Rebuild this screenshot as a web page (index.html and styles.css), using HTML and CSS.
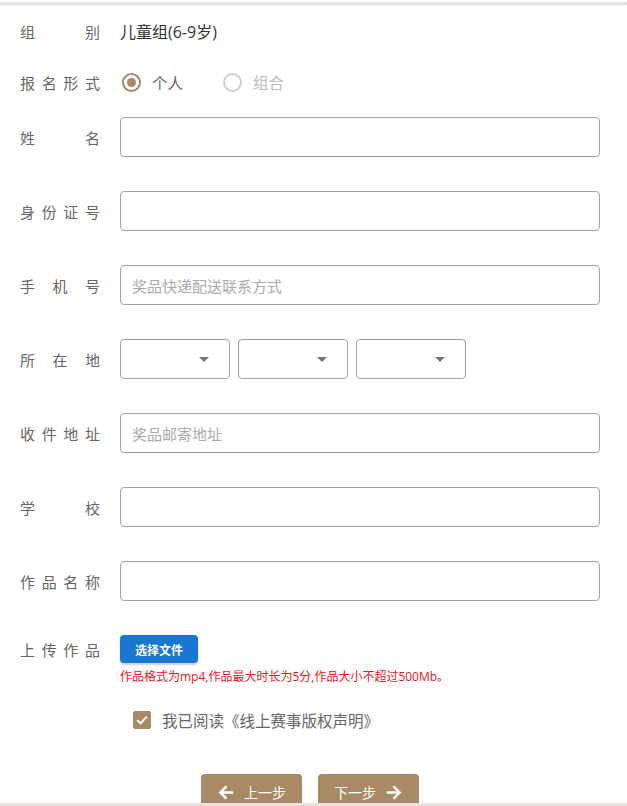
FILE: index.html
```html
<!DOCTYPE html>
<html lang="zh">
<head>
<meta charset="utf-8">
<title>报名</title>
<link rel="stylesheet" href="styles.css">
</head>
<body>
<div class="topline"></div>
<form class="form">
  <div class="row row-text">
    <span class="label">组别</span>
    <span class="value">儿童组(6-9岁)</span>
  </div>
  <div class="row row-radio">
    <span class="label">报名形式</span>
    <label class="radio checked"><span class="dot"></span><span>个人</span></label>
    <label class="radio"><span class="dot"></span><span>组合</span></label>
  </div>
  <div class="row row-input">
    <span class="label">姓名</span>
    <div class="input"></div>
  </div>
  <div class="row row-input">
    <span class="label">身份证号</span>
    <div class="input"></div>
  </div>
  <div class="row row-input">
    <span class="label">手机号</span>
    <div class="input"><span class="ph">奖品快递配送联系方式</span></div>
  </div>
  <div class="row row-input">
    <span class="label">所在地</span>
    <div class="selects">
      <div class="select"><span class="caret"></span></div>
      <div class="select"><span class="caret"></span></div>
      <div class="select"><span class="caret"></span></div>
    </div>
  </div>
  <div class="row row-input">
    <span class="label">收件地址</span>
    <div class="input"><span class="ph">奖品邮寄地址</span></div>
  </div>
  <div class="row row-input">
    <span class="label">学校</span>
    <div class="input"></div>
  </div>
  <div class="row row-input">
    <span class="label">作品名称</span>
    <div class="input"></div>
  </div>
  <div class="row row-upload">
    <span class="label">上传作品</span>
    <span class="filebtn">选择文件</span>
  </div>
  <div class="hint">作品格式为mp4,作品最大时长为5分,作品大小不超过500Mb。</div>
  <div class="agree">
    <span class="check"><svg viewBox="0 0 18 18" width="18" height="18"><path d="M4.2 9.2 L7.6 12.4 L13.8 5.6" fill="none" stroke="#fff" stroke-width="2"/></svg></span>
    <span>我已阅读《线上赛事版权声明》</span>
  </div>
  <div class="actions">
    <span class="btn"><svg viewBox="0 0 20 20" width="19" height="19"><path d="M17 10 H4 M10 3.5 L3.5 10 L10 16.5" fill="none" stroke="#fff" stroke-width="2.6"/></svg><span>上一步</span></span>
    <span class="btn"><span>下一步</span><svg viewBox="0 0 20 20" width="19" height="19"><path d="M3 10 H16 M10 3.5 L16.5 10 L10 16.5" fill="none" stroke="#fff" stroke-width="2.6"/></svg></span>
  </div>
</form>
<div class="bottomline"></div>
</body>
</html>
```

FILE: styles.css
```css
* { box-sizing: border-box; }
html, body { margin: 0; padding: 0; }
body {
  background: #fff;
  font-family: "Open Sans", "Noto Sans CJK SC", sans-serif;
  color: #333;
  overflow: hidden;
  height: 806px;
}
.topline {
  height: 3px;
  margin-top: 2px;
  background: #e3e3e3;
  box-shadow: 0 1px 2px rgba(0,0,0,0.06);
}
.form {
  padding: 6px 27px 0 20px;
  display: flex;
  flex-direction: column;
}
.row {
  display: flex;
  align-items: center;
  height: 40px;
}
.label {
  width: 80px;
  flex: none;
  margin-right: 20px;
  font-size: 15px;
  color: #666;
  text-align: justify;
  text-align-last: justify;
  font-family: "Noto Sans CJK SC", sans-serif;
}
.value {
  font-size: 16px;
  color: #333;
}
.row-text { margin-bottom: 11px; }
.row-radio { margin-bottom: 15px; }
.row-input { margin-bottom: 34px; }
.radio {
  display: flex;
  align-items: center;
  font-size: 15.5px;
  color: #bbb;
  margin-right: 40px;
  margin-left: 2px;
  font-family: "Noto Sans CJK SC", sans-serif;
}
.radio + .radio { margin-left: 0; }
.radio .dot {
  width: 19px;
  height: 19px;
  border-radius: 50%;
  border: 2px solid #cfcfcf;
  margin-right: 11px;
  display: flex;
  align-items: center;
  justify-content: center;
}
.radio.checked { color: #666; }
.radio.checked .dot { border-color: #a88b66; }
.radio.checked .dot::after {
  content: "";
  width: 9px;
  height: 9px;
  border-radius: 50%;
  background: #a88b66;
}
.input {
  flex: 1;
  height: 40px;
  border: 1px solid #a3a3a3;
  border-radius: 4px;
  padding: 0 11px;
  display: flex;
  align-items: center;
}
.ph {
  color: #aaa;
  font-size: 15px;
  font-family: "Noto Sans CJK SC", sans-serif;
}
.selects {
  display: flex;
  gap: 8px;
}
.select {
  width: 110px;
  height: 40px;
  border: 1px solid #a3a3a3;
  border-radius: 4px;
  position: relative;
}
.caret {
  position: absolute;
  right: 20px;
  top: 17px;
  width: 0;
  height: 0;
  border-left: 5px solid transparent;
  border-right: 5px solid transparent;
  border-top: 5px solid #777;
}
.row-upload {
  height: 28px;
}
.filebtn {
  width: 78px;
  height: 28px;
  background: #1976d2;
  color: #fff;
  border-radius: 4px;
  font-size: 12px;
  font-weight: bold;
  display: flex;
  align-items: center;
  justify-content: center;
  box-shadow: 0 2px 2px rgba(0,0,0,0.2);
  font-family: "Noto Sans CJK SC", sans-serif;
}
.hint {
  margin-left: 100px;
  margin-top: 5px;
  font-size: 12px;
  color: #e8161b;
  line-height: 18px;
}
.agree {
  margin-left: 113px;
  margin-top: 19px;
  display: flex;
  align-items: center;
  height: 30px;
  font-size: 15.5px;
  color: #666;
  font-family: "Noto Sans CJK SC", sans-serif;
}
.check {
  width: 18px;
  height: 18px;
  background: #a88b66;
  border-radius: 2px;
  margin-right: 11px;
  display: flex;
}
.actions {
  display: flex;
  justify-content: center;
  gap: 16px;
  margin-top: 39px;
}
.btn {
  width: 101px;
  height: 40px;
  background: #a88b66;
  color: #fff;
  border-radius: 4px;
  display: flex;
  align-items: center;
  justify-content: center;
  gap: 8px;
  padding-bottom: 4px;
  font-size: 14px;
  font-family: "Noto Sans CJK SC", sans-serif;
}
.bottomline {
  position: fixed;
  left: 0;
  right: 0;
  bottom: 0;
  height: 3px;
  background: #e6e3df;
}
```
